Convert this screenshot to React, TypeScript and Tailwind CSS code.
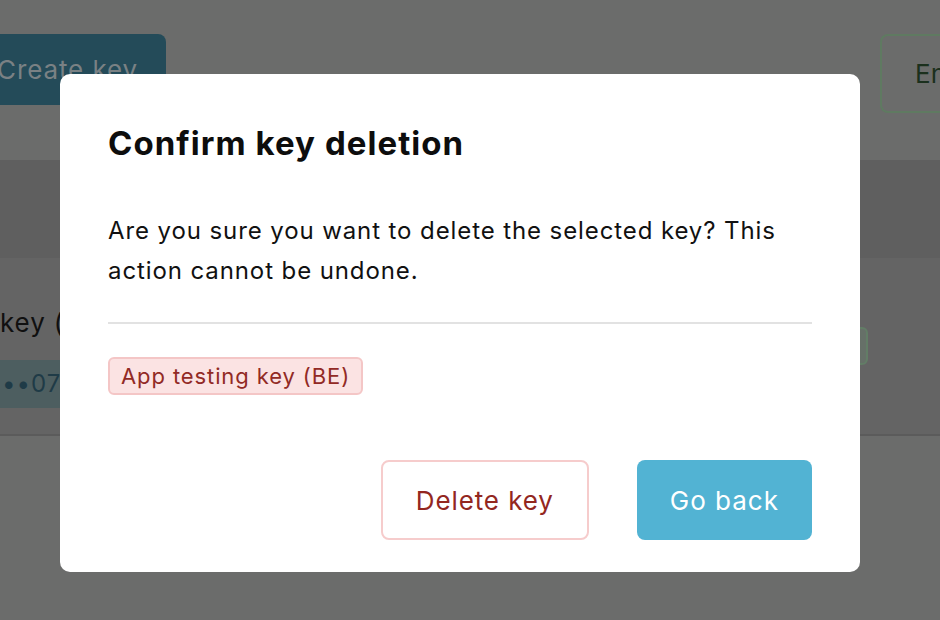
import React from "react";

export default function App() {
  const font = { fontFamily: "Inter, 'Noto Sans', 'Liberation Sans', sans-serif" };
  return (
    <div className="relative w-[940px] h-[620px] overflow-hidden bg-[#6b6c6b]" style={font}>
      {/* underlying dimmed page */}
      <div className="flex flex-col h-full">
        <div className="h-[160px] flex items-start justify-between pt-[34px]">
          <div className="-ml-[12px] h-[71px] w-[178px] rounded-[8px] bg-[#244b59] flex items-center pl-[9px] text-[26px] tracking-[0.9px] text-[#7a8184]">
            Create key
          </div>
          <div className="h-[79px] w-[60px] rounded-l-[8px] border-2 border-r-0 border-[#5f7a61] flex items-center pl-[33px] text-[26px] text-[#1b301d] overflow-hidden whitespace-nowrap">
            En
          </div>
        </div>
        <div className="h-[98px] bg-[#5f5f5f]" />
        <div className="h-[178px] bg-[#646464] border-b-2 border-[#5b5b5b] flex justify-between">
          <div className="flex flex-col pt-[46px] gap-[18px]">
            <div className="text-[26px] leading-[38px] tracking-[0.9px] text-[#101010] whitespace-nowrap">key (BE)</div>
            <div className="h-[48px] w-[90px] bg-[#4d5e60] flex items-center pl-[2px] text-[24px] text-[#1f3b47] whitespace-nowrap tracking-[1px]">
              ••070
            </div>
          </div>
          <div className="mt-[69px] mr-[72px] h-[38px] w-[30px] rounded-[6px] border-2 border-[#627d66] bg-[#667068]" />
        </div>
        <div className="flex-1" />
      </div>

      {/* modal */}
      <div className="absolute left-[60px] top-[74px] w-[800px] h-[498px] bg-white rounded-[10px] px-[48px] pt-[49px] pb-[32px] flex flex-col">
        <h2 className="text-[33px] leading-[40px] font-bold text-[#0d0d0d] tracking-[1.05px]">Confirm key deletion</h2>
        <p className="mt-[48px] text-[24px] leading-[40px] tracking-[0.9px] text-[#111111]">
          Are you sure you want to delete the selected key? This action cannot be undone.
        </p>
        <div className="mt-[31px] h-[2px] bg-[#e2e2e2]" />
        <div className="mt-[33px] flex">
          <span className="h-[38px] px-[11px] flex items-center rounded-[6px] border-2 border-[#f4c6c6] bg-[#fbe3e3] text-[22px] tracking-[0.9px] text-[#922a25]">
            App testing key (BE)
          </span>
        </div>
        <div className="mt-auto flex justify-end gap-[48px]">
          <button className="h-[80px] px-[33px] rounded-[8px] border-2 border-[#f6cccc] bg-white text-[26px] tracking-[0.9px] text-[#93271f]">
            Delete key
          </button>
          <button className="h-[80px] px-[33px] rounded-[8px] bg-[#52b3d3] text-[26px] tracking-[1px] text-white">
            Go back
          </button>
        </div>
      </div>
    </div>
  );
}
